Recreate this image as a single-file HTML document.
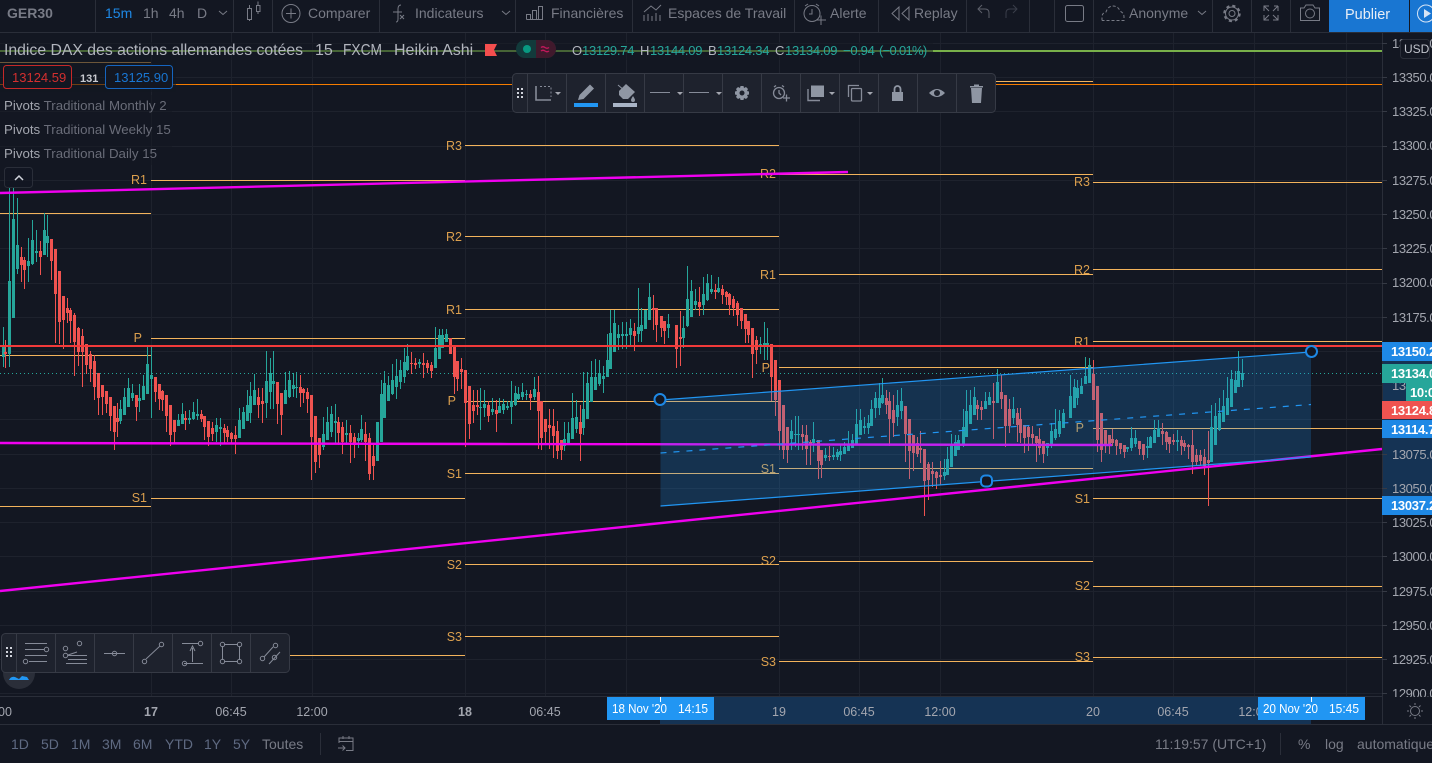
<!DOCTYPE html>
<html lang="fr">
<head>
<meta charset="utf-8">
<title>GER30</title>
<style>
html,body{margin:0;padding:0;background:#131722;width:1432px;height:763px;overflow:hidden}
svg{display:block}
text{font-family:"Liberation Sans",sans-serif;white-space:pre}
.t{font-size:14px;fill:#787b86}
.ax{font-size:13px;fill:#a3a6af;letter-spacing:-.4px}
.tm{font-size:12.5px;fill:#a3a6af;text-anchor:middle}
.lb{font-size:12.5px;fill:#dca04e;text-anchor:end}
.pl{font-size:13px;font-weight:700;fill:#fff;letter-spacing:-.3px}
.d{font-size:14px;fill:#5f6a82}
.ic{fill:none;stroke:#787b86;stroke-width:1}
.tb{fill:none;stroke:#868b98;stroke-width:1}
.v{font-size:13px;fill:#26a69a;letter-spacing:-.25px}
.k{font-size:13px;fill:#b2b5be}
</style>
</head>
<body>
<svg width="1432" height="763" viewBox="0 0 1432 763" xmlns="http://www.w3.org/2000/svg">
<rect width="1432" height="763" fill="#131722"/>

<!-- grid -->
<path stroke="#1e222d" stroke-width="1" fill="none" shape-rendering="crispEdges" d="M0 43.5H1382M0 77.5H1382M0 111.5H1382M0 146.5H1382M0 180.5H1382M0 214.5H1382M0 248.5H1382M0 283.5H1382M0 317.5H1382M0 351.5H1382M0 385.5H1382M0 419.5H1382M0 454.5H1382M0 488.5H1382M0 522.5H1382M0 556.5H1382M0 591.5H1382M0 625.5H1382M0 659.5H1382M0 693.5H1382M151.5 33V696M231.5 33V696M312.5 33V696M465.5 33V696M545.5 33V696M626.5 33V696M779.5 33V696M859.5 33V696M940.5 33V696M1093.5 33V696M1173.5 33V696M1254.5 33V696M1346.5 33V696"/>

<!-- pivot lines -->
<path stroke="#f3b35c" stroke-width="1" fill="none" shape-rendering="crispEdges" d="M0 213.5H151M0 355.5H151M0 506.5H151M0 62.5H151M151 180.5H465M151 338.5H465M151 498.5H465M151 655.5H465M465 145.5H779M465 236.5H779M465 309.5H779M465 401.5H779M465 473.5H779M465 564.5H779M465 636.5H779M779 81.5H1093M779 174.5H1093M779 274.5H1093M779 367.5H1093M779 468.5H1093M779 561.5H1093M779 661.5H1093M1093 182.5H1382M1093 269.5H1382M1093 341.5H1382M1093 428.5H1382M1093 498.5H1382M1093 586.5H1382M1093 657.5H1382"/>
<g class="x">
<text class="lb" x="147" y="184">R1</text><text class="lb" x="142" y="342">P</text><text class="lb" x="147" y="502">S1</text>
<text class="lb" x="462" y="150">R3</text><text class="lb" x="462" y="241">R2</text><text class="lb" x="462" y="314">R1</text><text class="lb" x="456" y="405">P</text><text class="lb" x="462" y="478">S1</text><text class="lb" x="462" y="569">S2</text><text class="lb" x="462" y="641">S3</text>
<text class="lb" x="776" y="178">R2</text><text class="lb" x="776" y="279">R1</text><text class="lb" x="770" y="372">P</text><text class="lb" x="776" y="473">S1</text><text class="lb" x="776" y="565">S2</text><text class="lb" x="776" y="666">S3</text>
<text class="lb" x="1090" y="186">R3</text><text class="lb" x="1090" y="274">R2</text><text class="lb" x="1090" y="346">R1</text><text class="lb" x="1084" y="432">P</text><text class="lb" x="1090" y="503">S1</text><text class="lb" x="1090" y="590">S2</text><text class="lb" x="1090" y="661">S3</text>
</g>

<!-- long lines -->
<path d="M0 51H1382" stroke="#78b04a" stroke-width="2"/>
<path d="M0 84.5H1382" stroke="#f57c00" stroke-width="1"/>
<path d="M0 373.5H1382" stroke="#26a69a" stroke-width="1" stroke-dasharray="1 3"/>

<!-- candles -->
<g transform="translate(.5 0)" fill="none" shape-rendering="crispEdges">
<path stroke="#26a69a" stroke-width="1" d="M3 327V367M9 188V367M13 188V318M17 198V274M28 238V282M32 220V265M36 230V262M44 213V255M47 215V257M120 400V424M124 388V415M128 378V407M132 384V401M139 384V412M143 375V400M147 347V394M151 347V418M178 414V426M182 403V424M189 410V424M193 402V420M197 399V420M216 418V442M220 418V446M239 408V438M243 407V429M247 390V421M250 382V423M254 374V405M266 351V418M270 358V409M273 351V409M285 372V403M289 371V398M293 373V397M296 372V398M323 417V450M327 407V438M331 406V437M335 404V443M346 420V445M358 433V448M361 415V442M377 422V461M381 380V442M384 371V418M388 376V401M392 364V395M396 359V399M400 360V389M404 348V383M407 344V371M419 359V368M435 327V368M439 329V359M442 329V348M446 329V342M480 388V430M484 390V417M492 398V415M499 398V413M503 399V414M507 401V410M511 381V424M515 386V406M518 387V400M522 383V400M526 390V400M534 377V400M564 422V451M568 422V443M572 393V439M576 400V433M583 372V435M587 372V419M591 361V402M595 359V390M599 360V386M603 366V393M607 334V376M610 310V369M614 310V352M618 325V350M622 322V349M626 322V349M630 319V345M638 288V342M641 308V342M645 312V329M649 283V320M668 314V338M683 316V348M687 266V327M691 280V317M695 289V310M703 277V315M707 274V301M711 275V294M718 277V293M760 337V354M764 322V360M767 328V360M791 420V450M795 416V447M798 416V450M813 422V452M825 448V461M833 447V460M837 449V460M840 444V461M844 442V454M848 431V450M852 434V448M856 409V445M860 409V435M864 417V434M868 415V434M871 400V426M875 392V418M879 383V415M882 378V404M897 390V426M901 388V419M944 459V480M947 447V475M951 434V467M955 435V456M958 435V450M963 409V447M966 390V437M970 390V423M974 387V415M985 392V408M989 392V405M997 369V403M1013 397V424M1047 443V456M1051 423V448M1055 409V440M1059 410V437M1063 409V428M1070 375V418M1074 379V408M1077 380V405M1081 378V394M1085 357V384M1089 358V383M1127 447V452M1131 427V451M1135 430V447M1147 437V458M1150 436V448M1154 420V443M1158 420V437M1177 430V451M1211 405V462M1215 403V445M1219 398V431M1223 390V422M1227 377V415M1231 370V407M1235 371V393M1238 351V387M1242 359V387"/>
<path stroke="#26a69a" stroke-width="3" d="M3 347V357M9 281V354M13 219V318M17 245V269M28 261V266M32 240V264M36 251V253M44 230V255M47 236V243M120 409V421M124 397V415M128 388V407M132 393V398M139 398V401M143 386V400M147 364V394M151 375V379M178 420V426M182 414V424M189 418V420M193 412V419M197 414V416M216 425V432M220 427V429M239 420V438M243 412V429M247 405V421M250 396V413M254 390V405M266 381V403M270 373V392M273 381V384M285 390V404M289 380V397M293 385V389M296 387V388M323 434V447M327 422V440M331 414V432M335 421V423M346 433V435M358 438V441M361 429V440M377 422V461M381 394V442M384 383V418M388 385V401M392 380V394M396 376V387M400 370V382M404 362V377M407 356V370M419 362V364M435 348V368M439 335V359M442 335V348M446 334V342M480 407V408M484 404V408M492 409V412M499 406V413M503 404V410M507 406V408M511 401V407M515 393V405M518 394V399M522 392V397M526 394V395M534 389V397M564 439V446M568 433V443M572 418V439M576 417V429M583 409V428M587 383V419M591 377V402M595 377V390M599 373V384M603 376V379M607 360V377M610 333V369M614 323V352M618 334V338M622 334V336M626 334V336M630 328V335M638 327V334M641 325V331M645 310V329M649 297V320M668 324V328M683 328V338M687 299V326M691 291V317M695 301V305M703 294V305M707 283V300M711 289V292M718 288V292M760 344V345M764 343V346M767 343V346M791 431V439M795 434V435M798 434V435M813 439V443M825 455V458M833 455V457M837 452V457M840 451V455M844 447V454M848 444V451M852 440V448M856 424V445M860 420V435M864 426V428M868 423V428M871 409V426M875 398V408M879 398V408M882 395V403M897 405V417M901 401V411M944 472V476M947 459V475M951 444V467M955 442V456M958 440V450M963 427V445M966 411V437M970 405V424M974 397V415M985 401V409M989 397V405M997 382V403M1013 409V418M1047 443V448M1051 431V446M1055 429V438M1059 421V434M1063 413V428M1070 396V418M1074 387V408M1077 388V398M1081 386V394M1085 376V384M1089 365V383M1127 447V449M1131 438V448M1135 438V444M1147 446V448M1150 437V448M1154 430V443M1158 428V437M1177 440V442M1211 427V462M1215 416V445M1219 413V430M1223 406V422M1227 398V415M1231 379V407M1235 380V393M1238 371V387M1242 373V380"/>
<path stroke="#ef5350" stroke-width="1" d="M5 340V368M21 247V282M24 257V289M40 241V275M51 239V280M55 249V343M59 271V344M63 296V349M67 298V323M70 308V343M74 313V376M78 327V366M82 329V387M86 344V374M90 351V382M94 355V400M98 373V415M102 385V415M106 391V413M110 397V431M114 406V450M117 403V437M136 395V421M155 377V402M159 384V410M162 390V411M166 395V432M170 405V446M174 420V443M185 411V430M201 410V422M204 416V440M208 421V446M212 422V441M224 424V444M227 426V442M231 432V444M235 426V454M258 388V418M262 388V423M277 382V424M281 393V435M300 375V407M303 388V403M307 388V413M311 395V480M315 416V473M319 438V468M338 417V445M342 422V454M350 425V463M354 433V458M365 422V461M369 433V480M373 443V480M411 352V374M415 358V369M423 353V378M427 360V373M431 362V378M450 338V354M454 346V394M457 361V391M461 358V389M465 370V447M469 386V439M473 390V423M477 390V415M488 401V422M496 400V432M530 390V410M538 376V449M541 401V450M545 419V444M549 409V449M553 409V458M557 421V459M561 440V460M580 405V461M634 323V351M653 295V330M656 308V342M661 316V337M664 321V344M676 325V368M680 311V366M699 287V316M715 284V299M722 285V304M726 291V305M729 293V315M733 296V316M737 301V326M741 308V329M745 314V343M748 321V343M752 328V378M756 336V364M771 344V401M775 360V416M779 380V450M783 405V459M787 427V463M802 425V450M806 425V465M810 440V465M818 440V479M821 450V478M829 446V461M886 390V414M889 392V446M893 395V437M905 406V462M909 419V479M913 435V471M917 437V457M920 431V463M924 449V516M928 462V500M932 462V487M936 471V489M940 461V485M977 400V420M981 401V420M993 383V439M1001 375V409M1005 395V447M1009 399V433M1017 408V442M1020 408V443M1024 425V453M1028 425V451M1032 426V446M1036 436V462M1039 428V455M1043 441V463M1093 360V400M1097 386V452M1101 413V462M1105 430V453M1109 435V454M1112 429V446M1116 439V455M1120 443V454M1124 445V458M1139 441V455M1143 444V460M1162 423V445M1166 431V450M1169 437V453M1173 434V445M1181 436V455M1184 440V451M1188 444V459M1192 430V474M1196 449V466M1200 450V466M1204 449V475M1208 431V506"/>
<path stroke="#ef5350" stroke-width="3" d="M5 352V354M21 257V265M24 260V270M40 251V257M51 239V261M55 249V294M59 271V322M63 296V320M67 308V313M70 310V321M74 315V342M78 328V352M82 336V352M86 344V365M90 354V369M94 361V387M98 373V398M102 385V397M106 391V404M110 397V416M114 406V432M117 418V422M136 395V407M155 377V392M159 384V399M162 391V400M166 395V416M170 405V435M174 420V432M185 418V420M201 414V419M204 416V427M208 421V437M212 428V434M224 428V433M227 430V437M231 433V439M235 435V439M258 397V405M262 401V404M277 382V404M281 393V415M300 387V393M303 389V393M307 392V399M311 395V437M315 416V462M319 438V455M338 422V433M342 427V442M350 433V442M354 437V445M365 434V442M369 438V474M373 456V466M411 363V364M415 363V365M423 363V365M427 363V368M431 365V371M450 338V354M454 346V377M457 361V379M461 369V372M465 370V403M469 386V424M473 405V411M477 405V407M488 405V416M496 410V414M530 394V398M538 392V411M541 401V438M545 419V432M549 425V428M553 426V436M557 431V451M561 440V450M580 422V434M634 331V336M653 308V310M656 308V325M661 316V328M664 321V331M676 325V349M680 337V339M699 302V307M715 290V292M722 289V295M726 292V297M729 294V305M733 299V308M737 303V315M741 308V321M745 314V329M748 321V335M752 328V354M756 340V350M771 344V377M775 360V400M779 380V431M783 405V450M787 427V450M802 434V437M806 435V449M810 442V444M818 440V461M821 450V465M829 456V457M886 398V405M889 401V419M893 410V423M905 406V434M909 419V451M913 435V453M917 443V454M920 448V450M924 449V481M928 464V480M932 471V474M936 472V478M940 475V477M977 405V409M981 407V410M993 401V403M1001 392V399M1005 395V426M1009 409V426M1017 413V425M1020 419V433M1024 425V438M1028 427V437M1032 434V438M1036 436V443M1039 439V448M1043 441V454M1093 374V400M1097 386V440M1101 413V450M1105 430V444M1109 435V444M1112 439V443M1116 440V446M1120 443V449M1124 445V452M1139 441V449M1143 444V455M1162 431V434M1166 432V442M1169 437V444M1173 440V442M1181 440V446M1184 443V447M1188 445V447M1192 445V462M1196 455V462M1200 455V461M1204 457V466M1208 460V463"/>
</g>

<!-- red level, magenta trendlines -->
<path d="M0 346H1382" stroke="#f23a3a" stroke-width="2"/>
<g fill="none" stroke="#f000f0" stroke-width="2.4">
<path d="M0 193L848 172"/>
<path d="M0 443L500 444L1112 445"/>
<path d="M0 591L1382 449"/>
</g>

<!-- channel -->
<path d="M660.5 400L1311 352V457L660.5 506Z" fill="#2196f3" fill-opacity=".22"/>
<path d="M660.5 400L1311 352M660.5 506L1311 457" stroke="#2196f3" stroke-width="1.2" fill="none"/>
<path d="M660.5 453L1311 404.5" stroke="#2196f3" stroke-width="1.2" stroke-dasharray="6 7" fill="none"/>
<circle cx="660" cy="399.5" r="5.5" fill="#131722" stroke="#1e88e5" stroke-width="2"/>
<circle cx="1311.5" cy="351.5" r="5.5" fill="#131722" stroke="#1e88e5" stroke-width="2"/>
<rect x="981" y="475.5" width="11" height="11" rx="4" fill="#131722" stroke="#1e88e5" stroke-width="2"/>

<!-- legend dim -->
<rect x="0" y="42" width="933" height="18" fill="#131722" fill-opacity=".5"/>
<rect x="0" y="60" width="176" height="32" fill="#131722" fill-opacity=".6"/>
<rect x="0" y="95" width="172" height="70" fill="#131722" fill-opacity=".5"/>

<text x="4" y="55" textLength="299" lengthAdjust="spacingAndGlyphs" style="font-size:16px;fill:#b2b5be">Indice DAX des actions allemandes cotées</text>
<text x="315" y="55" style="font-size:16px;fill:#b2b5be">15</text>
<text x="343" y="55" textLength="39" lengthAdjust="spacingAndGlyphs" style="font-size:16px;fill:#b2b5be">FXCM</text>
<text x="394" y="55" style="font-size:16px;fill:#b2b5be">Heikin Ashi</text>
<path d="M485 44H497L494 50L497 56H485Z" fill="#f44e4e"/>
<rect x="516" y="40" width="40" height="18" rx="9" fill="#123a3b"/>
<path d="M536 40H547A9 9 0 0 1 547 58H536Z" fill="#40192c"/>
<circle cx="527" cy="49" r="4" fill="#089981"/>
<path d="M541 47.5q2-1.5 4 0t4 0M541 51q2-1.5 4 0t4 0" stroke="#c2185b" stroke-width="1.4" fill="none"/>

<text class="k" x="572" y="55">O</text><text class="v" x="582" y="55">13129.74</text>
<text class="k" x="640" y="55">H</text><text class="v" x="650" y="55">13144.09</text>
<text class="k" x="708" y="55">B</text><text class="v" x="717" y="55">13124.34</text>
<text class="k" x="775" y="55">C</text><text class="v" x="785" y="55">13134.09</text>
<text class="v" x="843" y="55">−0.94</text><text class="v" x="879" y="55" textLength="48">(−0.01%)</text>

<rect x="3.5" y="65.5" width="68" height="23" rx="3" fill="#131722" stroke="#c62828"/>
<text x="12" y="82" style="font-size:13px;fill:#d32f2f">13124.59</text>
<text x="80" y="82" style="font-size:11px;font-weight:700;fill:#c8cad0">131</text>
<rect x="105.5" y="65.5" width="67" height="23" rx="3" fill="#131722" stroke="#1565c0"/>
<text x="114" y="82" style="font-size:13px;fill:#1976d2">13125.90</text>

<text x="4" y="110" style="font-size:13.3px;fill:#a3a6af">Pivots <tspan fill="#696c78">Traditional Monthly 2</tspan></text>
<text x="4" y="134" style="font-size:13.3px;fill:#a3a6af">Pivots <tspan fill="#696c78">Traditional Weekly 15</tspan></text>
<text x="4" y="158" style="font-size:13.3px;fill:#a3a6af">Pivots <tspan fill="#696c78">Traditional Daily 15</tspan></text>
<rect x="4.5" y="167.5" width="28" height="20" rx="3" fill="#131722" fill-opacity=".7" stroke="#2a2e39"/>
<path d="M15 180L19 176L23 180" stroke="#d1d4dc" stroke-width="1.5" fill="none"/>

<!-- drawing toolbar -->
<rect x="512.5" y="73.5" width="483" height="39" rx="4" fill="#1e222d" stroke="#363a45"/>
<path stroke="#363a45" shape-rendering="crispEdges" d="M527.5 74V112M566.5 74V112M605.5 74V112M644.5 74V112M683.5 74V112M722.5 74V112M761.5 74V112M800.5 74V112M839.5 74V112M878.5 74V112M917.5 74V112M956.5 74V112"/>
<path fill="#d1d4dc" d="M517 88h2v2h-2zM521 88h2v2h-2zM517 92h2v2h-2zM521 92h2v2h-2zM517 96h2v2h-2zM521 96h2v2h-2z"/>
<path class="tb" stroke-dasharray="2 2" d="M540 86.5H551V97"/><path class="tb" style="stroke:#868b98;stroke-width:1.6" d="M536 86V100H551"/>
<path fill="#a3a6af" d="M555 92h6l-3 3zM677 92h6l-3 3zM716 92h6l-3 3zM829 92h6l-3 3zM867 92h6l-3 3z"/>
<path fill="#8f96a3" d="M578 100l1.5-5L590 84.5l4 4L583.5 99z"/>
<rect x="574" y="103" width="24" height="4" fill="#2196f3"/>
<path d="M619 91L626 84L635 92L628 99H623L619 95Z" fill="#8f96a3"/><path d="M618 85L625 91" stroke="#8f96a3" fill="none"/><path d="M633 96q2 3 2 4a2 2 0 0 1-4 0q0-1 2-4z" fill="#8f96a3"/>
<rect x="613" y="103" width="24" height="4" fill="#a9b4c6"/>
<path stroke="#868b98" d="M650 92.5H670M689 92.5H709"/>
<path fill="#8f96a3" d="M740.5 86h3l.5 2 2-1 2 2-1 2 2 .5v3l-2 .5 1 2-2 2-2-1-.5 2h-3l-.5-2-2 1-2-2 1-2-2-.5v-3l2-.5-1-2 2-2 2 1zM742 90.5a2.5 2.5 0 1 0 .01 0z" fill-rule="evenodd"/>
<g class="tb" style="stroke-width:1.3"><circle cx="779" cy="93" r="5.5"/><path d="M774 87l2-1.5M784 87l-2-1.500M779 90V93L781 95M783 98H790M786.5 94.5V101.5"/></g>
<path fill="#8f96a3" d="M811 85.5H824V97H811z"/><path class="tb" style="stroke-width:1.4" d="M808 89V100.5H820"/>
<path class="tb" style="stroke-width:1.3" d="M848.5 97V85.5H859"/><rect class="tb" style="stroke-width:1.3" x="851.5" y="88.5" width="10" height="12.5" rx="1"/>
<path fill="#8f96a3" d="M892 92H903V101H892z"/><path class="tb" style="stroke-width:1.8;stroke:#8f96a3" d="M894.5 92V89a3 3 0 0 1 6 0V92"/>
<path fill="#8f96a3" fill-rule="evenodd" d="M929 93q8-8 16 0q-8 8-16 0zM937 90a3 3 0 1 0 .01 0z"/>
<path fill="#8f96a3" d="M971 88H982L981 103H972ZM970 86H983V87.5H970ZM974 84.5H979V86H974Z"/>

<!-- time axis -->
<rect x="0" y="696" width="1432" height="1" fill="#2a2e39"/>
<rect x="660" y="697" width="651" height="27" fill="#153354"/>
<text class="tm" x="5" y="716">00</text>
<text class="tm" x="151" y="716" style="font-weight:700">17</text>
<text class="tm" x="231" y="716">06:45</text>
<text class="tm" x="312" y="716">12:00</text>
<text class="tm" x="465" y="716" style="font-weight:700">18</text>
<text class="tm" x="545" y="716">06:45</text>
<text class="tm" x="779" y="716">19</text>
<text class="tm" x="859" y="716">06:45</text>
<text class="tm" x="940" y="716">12:00</text>
<text class="tm" x="1093" y="716">20</text>
<text class="tm" x="1173" y="716">06:45</text>
<text class="tm" x="1254" y="716">12:00</text>
<rect x="607" y="697" width="107" height="23" fill="#2196f3"/>
<rect x="1258" y="697" width="107" height="23" fill="#2196f3"/>
<path stroke="#fff" d="M660.5 697V702M1311.5 697V702"/>
<text x="612" y="713" textLength="55" lengthAdjust="spacingAndGlyphs" style="font-size:13px;fill:#fff">18 Nov '20</text><text x="678" y="713" textLength="30" lengthAdjust="spacingAndGlyphs" style="font-size:13px;fill:#fff">14:15</text>
<text x="1263" y="713" textLength="55" lengthAdjust="spacingAndGlyphs" style="font-size:13px;fill:#fff">20 Nov '20</text><text x="1329" y="713" textLength="30" lengthAdjust="spacingAndGlyphs" style="font-size:13px;fill:#fff">15:45</text>

<!-- price axis -->
<rect x="1383" y="33" width="49" height="691" fill="#131722"/>
<rect x="1383" y="352" width="49" height="154" fill="#153354"/>
<rect x="1382" y="33" width="1" height="691" fill="#2a2e39"/>
<rect x="0" y="724" width="1432" height="1" fill="#2a2e39"/>
<path stroke="#363a45" shape-rendering="crispEdges" d="M1382 43.5h5M1382 77.5h5M1382 111.5h5M1382 146.5h5M1382 180.5h5M1382 214.5h5M1382 248.5h5M1382 283.5h5M1382 317.5h5M1382 454.5h5M1382 488.5h5M1382 522.5h5M1382 556.5h5M1382 591.5h5M1382 625.5h5M1382 659.5h5M1382 693.5h5"/>
<g class="pr">
<text class="ax" x="1392" y="48">13375.0</text>
<text class="ax" x="1392" y="82">13350.0</text>
<text class="ax" x="1392" y="116">13325.0</text>
<text class="ax" x="1392" y="150">13300.0</text>
<text class="ax" x="1392" y="185">13275.0</text>
<text class="ax" x="1392" y="219">13250.0</text>
<text class="ax" x="1392" y="253">13225.0</text>
<text class="ax" x="1392" y="287">13200.0</text>
<text class="ax" x="1392" y="322">13175.0</text>
<text class="ax" x="1392" y="390">13125.0</text>
<text class="ax" x="1392" y="459">13075.0</text>
<text class="ax" x="1392" y="493">13050.0</text>
<text class="ax" x="1392" y="527">13025.0</text>
<text class="ax" x="1392" y="561">13000.0</text>
<text class="ax" x="1392" y="596">12975.0</text>
<text class="ax" x="1392" y="630">12950.0</text>
<text class="ax" x="1392" y="664">12925.0</text>
<text class="ax" x="1392" y="698">12900.0</text>
</g>
<rect x="1383" y="697" width="49" height="27" fill="#131722"/>
<rect x="1382" y="342" width="50" height="19" fill="#1e88e5"/><text class="pl" x="1391" y="356">13150.2</text>
<rect x="1382" y="364" width="50" height="19" fill="#26a69a"/><text class="pl" x="1391" y="378">13134.0</text>
<rect x="1406" y="383" width="26" height="18" fill="#26a69a"/><text class="pl" x="1410" y="397">10:02</text>
<rect x="1382" y="401" width="50" height="18" fill="#ef5350"/><text class="pl" x="1391" y="415">13124.8</text>
<rect x="1382" y="420" width="50" height="18" fill="#1e88e5"/><text class="pl" x="1391" y="434">13114.7</text>
<rect x="1382" y="496" width="50" height="19" fill="#1e88e5"/><text class="pl" x="1391" y="510">13037.2</text>
<rect x="1400.5" y="39.5" width="29" height="19" rx="3" fill="#131722" stroke="#2a2e39"/>
<text x="1404" y="53" style="font-size:12px;fill:#c0c3cb">USD</text>
<circle cx="1415" cy="711" r="4.5" fill="none" stroke="#787b86"/>
<path stroke="#787b86" d="M1415 703v2M1415 717v2M1407 711h2M1421 711h2M1409.5 705.5l1.5 1.5M1419 715l1.5 1.5M1409.5 716.5l1.5-1.5M1419 707l1.5-1.5"/>

<!-- left-bottom toolbar -->
<circle cx="19" cy="673" r="16" fill="#2a2e39"/>
<path d="M9 680q2-4 6-3l4 2 3-3 5 1 2 3z" fill="#2196f3"/>
<rect x="1.5" y="633.5" width="288" height="39" rx="4" fill="#1e222d" stroke="#363a45"/>
<path stroke="#363a45" shape-rendering="crispEdges" d="M16.5 634V672M55.5 634V672M94.5 634V672M133.5 634V672M172.5 634V672M211.5 634V672M250.5 634V672"/>
<path fill="#d1d4dc" d="M6 647h2v2H6zM10 647h2v2h-2zM6 651h2v2H6zM10 651h2v2h-2zM6 655h2v2H6zM10 655h2v2h-2z"/>
<g class="tb">
<path d="M25 643.5H47M25 649.5H44M25 655.5H47"/><path d="M29 661.5H47"/>
<circle cx="46.5" cy="649.5" r="2.2"/><circle cx="25.5" cy="661.5" r="2.2"/>
<path d="M68 655L77 652M68 655.5H87M68 659.5H87M66 663.5H87"/>
<circle cx="65.5" cy="648.5" r="2.2"/><circle cx="79.5" cy="643.5" r="2.2"/><circle cx="65.5" cy="655.5" r="2.2"/>
<path d="M104 653.5H125"/><circle cx="114.5" cy="653.5" r="2.2"/>
<path d="M146 659L160 646"/><circle cx="144.5" cy="661.5" r="2.2"/><circle cx="161.5" cy="644.5" r="2.2"/>
<path d="M182 643.5H199M184 663.5H203M192.5 662V648M190 651L192.5 646L195 651"/><circle cx="200.5" cy="643.5" r="2.2"/><circle cx="184.5" cy="663.5" r="2.2"/>
<path d="M224 644.5H238M224 661.5H238M222.5 646V660M239.5 646V660"/><circle cx="222.5" cy="644.5" r="2.2"/><circle cx="239.5" cy="644.5" r="2.2"/><circle cx="222.5" cy="661.5" r="2.2"/><circle cx="239.5" cy="661.5" r="2.2"/>
<path d="M264 657L273 647M269 664L280 652"/><circle cx="262.5" cy="658.5" r="2.2"/><circle cx="275.5" cy="645.5" r="2.2"/><circle cx="274.5" cy="657.5" r="2.2"/>
</g>

<!-- top bar -->
<rect x="0" y="0" width="1432" height="32" fill="#131722"/>
<rect x="0" y="32" width="1432" height="1" fill="#2a2e39"/>
<path stroke="#2a2e39" shape-rendering="crispEdges" d="M95.5 0V32M233.5 0V32M272.5 0V32M379.5 0V32M515.5 0V32M632.5 0V32M794.5 0V32M878.5 0V32M966.5 0V32M1029.5 0V32M1054.5 0V32M1093.5 0V32M1212.5 0V32M1251.5 0V32M1290.5 0V32"/>
<text x="7" y="18" style="font-size:14px;font-weight:700;fill:#787b86">GER30</text>
<text x="105" y="18" style="font-size:14px;fill:#1e88e5">15m</text>
<text class="t" x="143" y="18">1h</text>
<text class="t" x="169" y="18">4h</text>
<text class="t" x="197" y="18">D</text>
<g class="ic">
<path d="M219 11L223 14.5L227 11"/>
<rect x="247.5" y="8.5" width="4" height="11"/><path d="M249.5 5V8.5M249.5 19.5V21"/>
<rect x="256.5" y="5.500" width="3.5" height="6"/><path d="M258 1.5V5.5M258 11.5V14"/>
<circle cx="291" cy="13.5" r="9"/><path d="M286 13.5H296M291 8.5V18.5"/>
<path d="M396 22q2 0 2-3V9q0-4 3-4M393 12H402M400 15l4 4M404 15l-4 4"/>
<path d="M502 11L506 14.5L510 11"/>
<path d="M526.5 19.5H542.5V6.5H538.5V19.5M532.5 19.5V10.5H536.5V19.5M526.5 19.5V14.5H530.5V19.5"/>
<path d="M644 12L651 6L656 10L661 5M644 21V15M648 21V14M652 21V16M656 21V13M660 21V15"/>
<circle cx="812" cy="13.5" r="8"/><path d="M805 6L808 4M819 6L816 4M812 9V14H809M816 20H826M821 15.5V25"/>
<path d="M899 7L892 13.5L899 20ZM909 7L902 13.5L909 20Z"/>
<path d="M989 18V13Q989 9 985 9H978M982 5L978 9L982 13" stroke="#5d606b"/>
<path d="M1006 18V13Q1006 9 1010 9H1017M1013 5L1017 9L1013 13" stroke="#3a3e4a"/>
<rect x="1065.5" y="5.5" width="18" height="16" rx="2"/>
<path d="M1102 20.5V17Q1102 13 1106 12Q1108 6 1113 6Q1118 6 1120 11Q1124 13 1124 17V20.5H1102" stroke-dasharray="3 2"/>
<path d="M1198 11L1202 14.5L1206 11"/>
<circle cx="1232" cy="13.5" r="7.5" stroke-width="2.5" stroke-dasharray="3 2.9"/><circle cx="1232" cy="13.5" r="6.500"/>
<circle cx="1232" cy="13.5" r="3"/>
<path d="M1264 11V6H1269M1264 6L1269 11M1278 6H1274M1278 6V11M1278 6L1273 11M1264 15V20H1269M1264 20L1269 15M1278 15V20H1273M1278 20L1273 15"/>
<path d="M1300.5 8H1304L1306 5H1313L1315 8H1319.5V20.5H1300.5Z"/><circle cx="1310" cy="13.5" r="4.5"/>
</g>
<text class="t" x="308" y="18">Comparer</text>
<text class="t" x="415" y="18">Indicateurs</text>
<text class="t" x="551" y="18">Financières</text>
<text class="t" x="668" y="18">Espaces de Travail</text>
<text class="t" x="830" y="18">Alerte</text>
<text class="t" x="914" y="18">Replay</text>
<text class="t" x="1129" y="18">Anonyme</text>
<rect x="1329" y="0" width="80" height="32" fill="#1976d2"/>
<text x="1345" y="19" style="font-size:14.5px;fill:#e8eef6">Publier</text>
<rect x="1409" y="0" width="23" height="32" fill="#1976d2"/>
<rect x="1409" y="0" width="1" height="32" fill="#131722"/>
<circle cx="1426" cy="13.5" r="8.5" fill="none" stroke="#d6e4f5"/>
<path d="M1424 9L1431 13.5L1424 18Z" fill="#d6e4f5"/>

<!-- bottom bar -->
<text class="d" x="11" y="749">1D</text>
<text class="d" x="41" y="749">5D</text>
<text class="d" x="71" y="749">1M</text>
<text class="d" x="102" y="749">3M</text>
<text class="d" x="133" y="749">6M</text>
<text class="d" x="165" y="749">YTD</text>
<text class="d" x="204" y="749">1Y</text>
<text class="d" x="233" y="749">5Y</text>
<text x="262" y="749" style="font-size:14px;fill:#787b86">Toutes</text>
<path stroke="#2a2e39" shape-rendering="crispEdges" d="M320.5 733V755M1280.5 733V755"/>
<g class="ic">
<path d="M339 743V738H353V750.5H346M339 741.5H353M343 736V739M349 736V739M338 748H345M342.5 745.5L345 748L342.5 750.5"/>
</g>
<text class="t" x="1155" y="749">11:19:57 (UTC+1)</text>
<text class="t" x="1298" y="749">%</text>
<text class="t" x="1325" y="749">log</text>
<text class="t" x="1357" y="749">automatique</text>
</svg>
</body>
</html>
